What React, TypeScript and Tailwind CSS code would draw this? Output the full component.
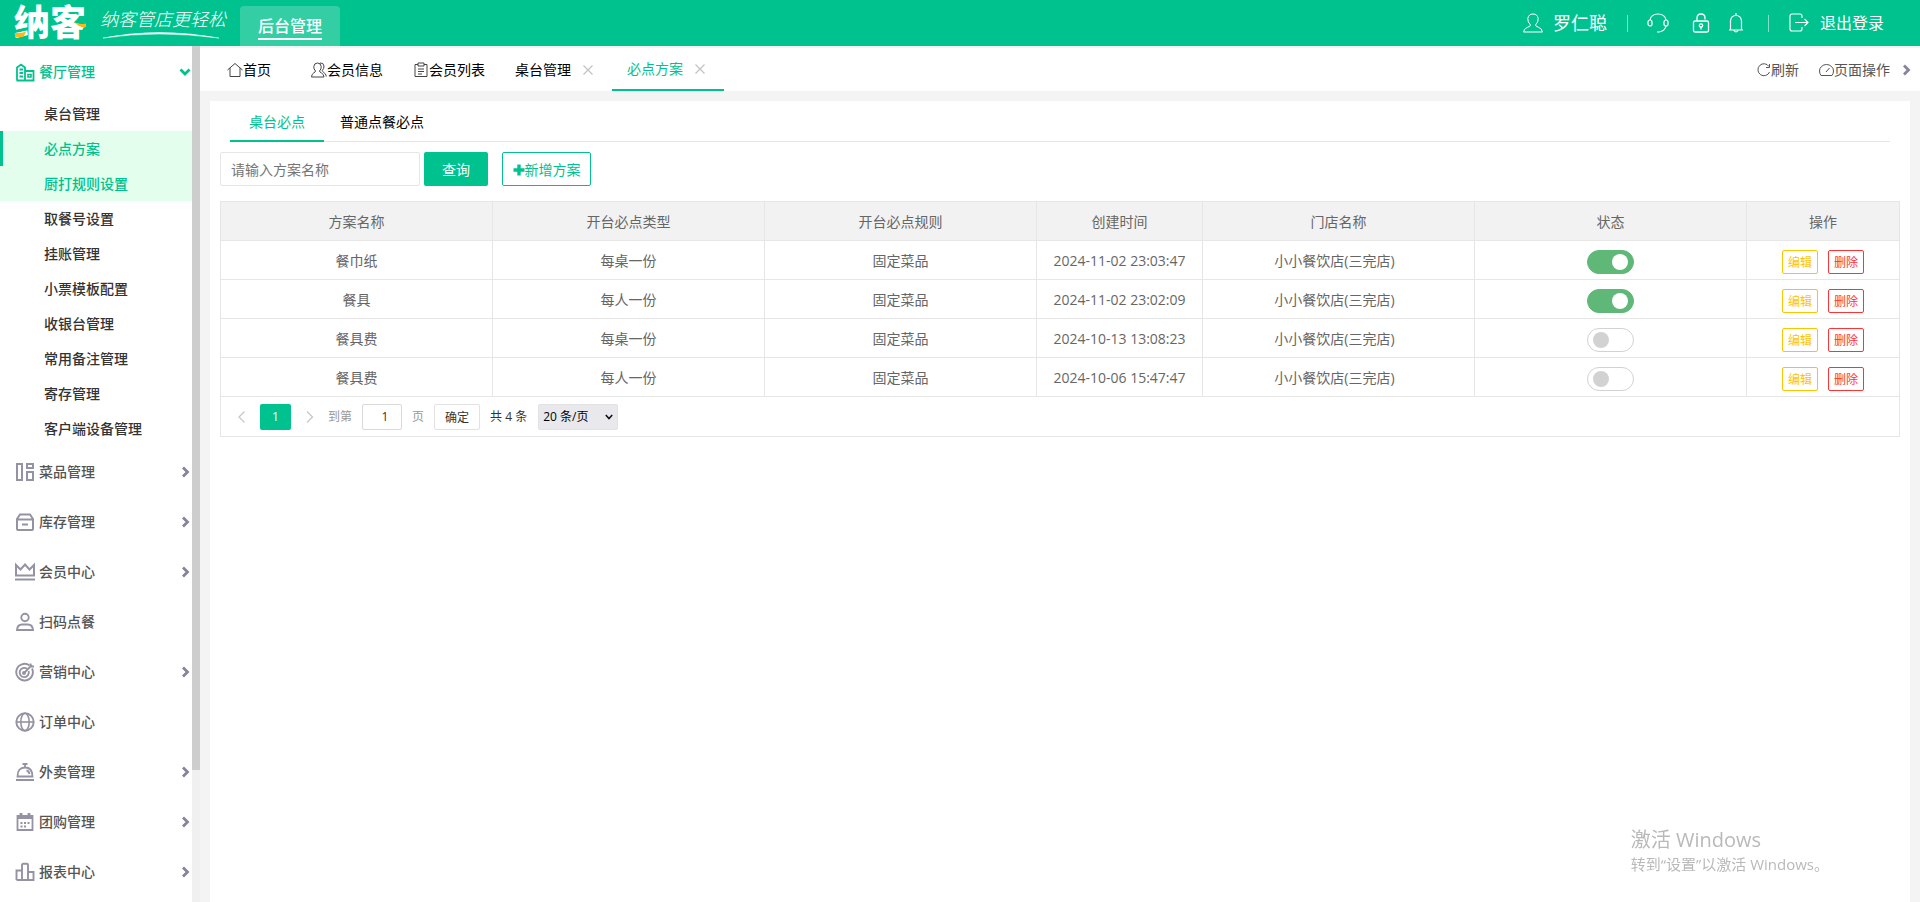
import React from 'react';

type IconProps = { children: React.ReactNode; className?: string; box?: string; width?: number };

const Icon: React.FC<IconProps> = ({ children, className = "h-5 w-5", box = "0 0 20 20", width = 2 }) => (
    <svg
        viewBox={box}
        className={`shrink-0 ${className}`}
        fill="none"
        stroke="currentColor"
        strokeWidth={width}
        aria-hidden="true"
    >
        {children}
    </svg>
);

const Chevron: React.FC<{ down?: boolean }> = ({ down }) => (
    <Icon className="h-3 w-3" box="0 0 12 12" width={2.8}>
        {down ? <path d="M1.500 3.500l4.500 4.500L10.500 3.500" /> : <path d="M4 1.500L8.500 6L4 10.500" />}
    </Icon>
);

const icons = {
    restaurant: (
        <>
            <path d="M2 18.500V5.500L6 2.500l4 3v13M10 9h8.500v9.500H1.500M4.500 7.500H8M4.500 11H8M4.500 14.500H8" strokeWidth="1.8" />
            <path d="M13 12.500h3v2.500h-3z" strokeWidth="1.6" />
        </>
    ),
    dish: <path d="M2 2h5v16H2zM12 2h6v4h-6zM12 10h6v8h-6z" strokeWidth="2" />,
    stock: <path d="M2 7.500h16V17q0 1-1 1H3q-1 0-1-1zM2 7l3-4.500h10L18 7M7 12.500h6" strokeWidth="2" />,
    crown: <path d="M1 3v10.500h18V3l-4.500 4.500L10 2.500 5.500 7.500zM0 17.500h20" strokeWidth="2" />,
    person: (
        <>
            <circle cx="10" cy="5.500" r="3.700" strokeWidth="1.9" />
            <path d="M2 18q.5-5.500 5-5.500h6q4.500 0 5 5.500z" strokeWidth="1.9" />
        </>
    ),
    target: (
        <>
            <path d="M14.500 3.500A8.300 8.300 0 1 0 17 6.500" strokeWidth="1.9" />
            <path d="M12 6.800A4.600 4.600 0 1 0 13.600 9" strokeWidth="1.9" />
            <path d="M9 11l8-8M15.500 1.500v3H19" strokeWidth="1.8" />
            <circle cx="9" cy="11" r="1" fill="currentColor" />
        </>
    ),
    globe: (
        <>
            <circle cx="10" cy="10" r="8.700" strokeWidth="1.9" />
            <ellipse cx="10" cy="10" rx="4.200" ry="8.700" strokeWidth="1.6" />
            <path d="M1 10h18" strokeWidth="1.6" />
        </>
    ),
    bell: (
        <path d="M2.500 14.500q0-9 7.500-9t7.500 9zM1 18h18M7.500 2h5M10 2v3.500M11.500 8.500q2.500.5 3 3.500" strokeWidth="1.8" />
    ),
    calendar: (
        <>
            <path d="M2.500 4h15v14h-15z" strokeWidth="1.8" />
            <path d="M2 5.500h16M6 1v4M14 1v4" strokeWidth="2.8" />
            <path d="M5.500 11h9M5.500 14.500h5.500" strokeWidth="2" strokeDasharray="2 1.500" />
        </>
    ),
    report: <path d="M1.500 18V8.500H7M13 10h5.500v8h-17M7 18V3q0-1.200 1.200-1.200h3.600Q13 1.800 13 3v15" strokeWidth="1.9" />,
};

const subMenu = [
    { label: "桌台管理" },
    { label: "必点方案", active: true, bar: true },
    { label: "厨打规则设置", active: true },
    { label: "取餐号设置" },
    { label: "挂账管理" },
    { label: "小票模板配置" },
    { label: "收银台管理" },
    { label: "常用备注管理" },
    { label: "寄存管理" },
    { label: "客户端设备管理" },
];

const menu = [
    { label: "菜品管理", icon: icons.dish, arrow: true },
    { label: "库存管理", icon: icons.stock, arrow: true },
    { label: "会员中心", icon: icons.crown, arrow: true },
    { label: "扫码点餐", icon: icons.person, arrow: false },
    { label: "营销中心", icon: icons.target, arrow: true },
    { label: "订单中心", icon: icons.globe, arrow: false },
    { label: "外卖管理", icon: icons.bell, arrow: true },
    { label: "团购管理", icon: icons.calendar, arrow: true },
    { label: "报表中心", icon: icons.report, arrow: true },
];

const rows = [
    { name: "餐巾纸", type: "每桌一份", rule: "固定菜品", time: "2024-11-02 23:03:47", shop: "小小餐饮店(三完店)", on: true },
    { name: "餐具", type: "每人一份", rule: "固定菜品", time: "2024-11-02 23:02:09", shop: "小小餐饮店(三完店)", on: true },
    { name: "餐具费", type: "每桌一份", rule: "固定菜品", time: "2024-10-13 13:08:23", shop: "小小餐饮店(三完店)", on: false },
    { name: "餐具费", type: "每人一份", rule: "固定菜品", time: "2024-10-06 15:47:47", shop: "小小餐饮店(三完店)", on: false },
];

const columns = [
    { title: "方案名称", width: "w-[272px]" },
    { title: "开台必点类型", width: "w-[272px]" },
    { title: "开台必点规则", width: "w-[272px]" },
    { title: "创建时间", width: "w-[166px]" },
    { title: "门店名称", width: "w-[272px]" },
    { title: "状态", width: "w-[272px]" },
    { title: "操作", width: "w-[153px]" },
];

const Header: React.FC = () => (
    <header className="flex h-[46px] shrink-0 items-center justify-between bg-[#00c28e] text-white">
        <div className="flex h-full items-center">
            <a href="#" className="relative ml-[14px] text-4xl leading-[46px] font-black">
                纳客
                <svg viewBox="0 0 72 46" className="absolute top-0 left-0 h-[46px] w-[72px]" aria-hidden="true">
                    <path d="M1 33q6 .5 11-1.500l-2 4.500q-4 2-9 1z" fill="#fbb915" />
                    <path d="M60 22q5 3 12 1.500v3.500q-6 1.500-12-5z" fill="#fbb915" />
                </svg>
            </a>
            <div className="ml-[14px] flex w-[126px] flex-col">
                <span className="text-lg leading-6 font-light italic">纳客管店更轻松</span>
                <svg viewBox="0 0 126 8" className="h-2 w-full" aria-hidden="true">
                    <path d="M3 7Q58-4 119 7Q58-1 3 7z" fill="#fff" stroke="#fff" strokeWidth="0.5" />
                </svg>
            </div>
            <a href="#" className="ml-[14px] flex h-10 w-[100px] justify-center self-end rounded-t bg-white/20">
                <span className="h-[34px] border-b-2 border-white pt-2 text-base leading-6 font-medium">后台管理</span>
            </a>
        </div>
        <div className="flex items-center pr-9">
            <Icon className="h-5 w-5" width={1}>
                <path d="M7.500 12Q4.500 9 4.800 5.500 5.500 1 10 1t5.200 4.500Q15.500 9 12.500 12q0 1.500 3 2.300Q19 15.500 19.500 19H.5q.5-3.500 4-4.700 3-.8 3-2.300z" />
            </Icon>
            <a href="#" className="ml-[10px] text-lg leading-6">罗仁聪</a>
            <span className="ml-5 h-[17px] w-px bg-white/50"></span>
            <button type="button" aria-label="客服" className="ml-[19px]">
                <Icon className="h-[22px] w-[22px]" box="0 0 22 22" width={1.2}>
                    <path d="M3 8Q4 2 11 2t8 6M19 14q-1 5-7 6h-2" />
                    <rect x="1" y="8" width="4" height="6" rx="2" />
                    <rect x="17" y="8" width="4" height="6" rx="2" />
                </Icon>
            </button>
            <button type="button" aria-label="锁屏" className="ml-[23px]">
                <Icon className="h-5 w-[18px]" box="0 0 18 20" width={1.3}>
                    <rect x="1.500" y="8" width="15" height="11" rx="1.500" />
                    <path d="M5 8V5q0-4 4-4t4 4v1.500M9 13.500v3" />
                    <circle cx="9" cy="12.500" r="1.700" />
                </Icon>
            </button>
            <button type="button" aria-label="消息" className="ml-[18px]">
                <Icon className="h-5 w-4" box="0 0 16 20" width={1.2}>
                    <path d="M1 17h14M2.500 17V8Q3 2.500 8 2.500T13.500 8v9M8 0v2.500M6 17.500q2 3 4 0" />
                </Icon>
            </button>
            <span className="ml-6 h-[17px] w-px bg-white/50"></span>
            <a href="#" className="ml-5 flex items-center gap-[11px] text-base leading-6">
                <Icon className="h-5 w-5" width={1.1}>
                    <path d="M13 5V3q0-2-2-2H3Q1 1 1 3v13q0 2 2 2h8q2 0 2-2v-2M6 9.500h13M15.500 6L19 9.500 15.500 13" />
                </Icon>
                退出登录
            </a>
        </div>
    </header>
);

const Sidebar: React.FC = () => (
    <aside className="flex w-[200px] shrink-0 bg-white">
        <nav className="flex-1 text-sm font-medium">
            <a href="#" className="flex h-[50px] items-center pt-[2px] pr-px pl-[15px] text-[#00c28e]">
                <Icon>{icons.restaurant}</Icon>
                <span className="ml-1 flex-1">餐厅管理</span>
                <Chevron down />
            </a>
            <ul>
                {subMenu.map((item) => (
                    <li key={item.label}>
                        <a
                            href="#"
                            className={`flex h-[35px] items-center border-l-[3px] pl-[41px] ${item.bar ? "border-[#00c28e]" : "border-transparent"} ${item.active ? "bg-[#e3feec] text-[#00c28e]" : "text-[#333]"}`}
                        >
                            {item.label}
                        </a>
                    </li>
                ))}
            </ul>
            {menu.map((item) => (
                <a key={item.label} href="#" className="flex h-[50px] items-center pt-[2px] pr-px pl-[15px] text-[#555]">
                    <Icon className="h-5 w-5 text-[#9393a4]">{item.icon}</Icon>
                    <span className="ml-1 flex-1">{item.label}</span>
                    {item.arrow && <span className="text-[#85859a]"><Chevron /></span>}
                </a>
            ))}
        </nav>
        <div className="w-2 bg-[#f0f0f0]">
            <div className="h-[724px] bg-[#cdcdcd]"></div>
        </div>
    </aside>
);

const CloseTab: React.FC = () => (
    <button type="button" aria-label="关闭" className="ml-3 text-[#c2c2c2]">
        <Icon className="h-[10px] w-[10px]" box="0 0 10 10" width={1.2}>
            <path d="M.5.5l9 9M9.500.5l-9 9" />
        </Icon>
    </button>
);

const TabBar: React.FC = () => (
    <div className="mt-[2px] flex h-[43px] shrink-0 justify-between bg-white pr-2 text-sm text-black">
        <div className="flex pl-3">
            <a href="#" className="flex items-center pr-[25px] pl-[15px]">
                <Icon className="h-4 w-4 text-[#444]" box="0 0 16 16" width={1}>
                    <path d="M.5 8L8 1.500 15.500 8M3 6v8.500h10V6" />
                </Icon>
                首页
            </a>
            <a href="#" className="flex items-center px-[15px]">
                <Icon className="h-4 w-4 text-[#444]" box="0 0 16 16" width={1}>
                    <path d="M4.500 9Q2.500 7 2.800 4.500 3.200 1 6.500 1t3.700 3.500Q10.500 7 8.500 9q0 1 2 2 2.200 1 2.500 4H.5q.2-3 2.200-4 1.800-1 1.800-2zM9 1q3.500-.5 4 3 .2 2.500-1.700 4.500 0 1 1.500 2 2.200 1 2.500 4" />
                </Icon>
                会员信息
            </a>
            <a href="#" className="flex items-center px-[15px]">
                <Icon className="h-4 w-4 text-[#444]" box="0 0 16 16" width={1}>
                    <path d="M5 2.500H2v12h12v-12h-3M5 1h6v3H5zM5 7h6M5 9.500h6M5 12h4" />
                </Icon>
                会员列表
            </a>
            <div className="flex w-[112px] items-center pl-[15px]">
                <a href="#">桌台管理</a>
                <CloseTab />
            </div>
            <div className="flex w-[112px] items-center border-b-2 border-[#00c28e] pl-[15px] text-[#00c28e]">
                <a href="#">必点方案</a>
                <CloseTab />
            </div>
        </div>
        <div className="flex items-center text-[#555]">
            <button type="button" className="flex items-center">
                <Icon className="h-[14px] w-[14px]" box="0 0 14 14" width={1}>
                    <path d="M12.500 9A6 6 0 1 1 12 3.500M12.500 1v3.500H9" />
                </Icon>
                刷新
            </button>
            <button type="button" className="ml-5 flex items-center">
                <Icon className="h-[14px] w-[15px]" box="0 0 15 14" width={1}>
                    <path d="M2 12.500Q.5 10.500.5 8a7 6.500 0 0 1 14 0q0 2.500-1.500 4.500zM7 9l3.500-4" />
                </Icon>
                页面操作
                <span className="ml-[10px] text-[#85859a]"><Chevron /></span>
            </button>
        </div>
    </div>
);

const PlanTable: React.FC = () => (
    <table className="w-full table-fixed border-collapse text-center text-sm text-[#666]">
        <thead className="bg-[#f2f2f2]">
            <tr>
                {columns.map((col) => (
                    <th key={col.title} className={`h-[39px] border border-[#e6e6e6] p-0 pt-[2px] font-normal ${col.width}`}>
                        {col.title}
                    </th>
                ))}
            </tr>
        </thead>
        <tbody>
            {rows.map((row) => (
                <tr key={row.time}>
                    <td className="h-[39px] border border-[#e6e6e6] p-0 pt-[2px]">{row.name}</td>
                    <td className="border border-[#e6e6e6] p-0 pt-[2px]">{row.type}</td>
                    <td className="border border-[#e6e6e6] p-0 pt-[2px]">{row.rule}</td>
                    <td className="border border-[#e6e6e6] p-0 pt-[2px] whitespace-nowrap">{row.time}</td>
                    <td className="border border-[#e6e6e6] p-0 pt-[2px] pr-2">{row.shop}</td>
                    <td className="border border-[#e6e6e6] p-0 pt-1">
                        <input
                            type="checkbox"
                            role="switch"
                            aria-label="状态"
                            defaultChecked={row.on}
                            className="mx-auto flex h-6 w-[47px] appearance-none items-center rounded-full border border-[#d2d2d2] px-[5px] before:h-4 before:w-4 before:rounded-full before:bg-[#d2d2d2] checked:justify-end checked:border-[#5fb878] checked:bg-[#5fb878] checked:before:bg-white"
                        />
                    </td>
                    <td className="border border-[#e6e6e6] p-0 pt-1">
                        <div className="flex justify-center gap-[10px] text-xs">
                            <button type="button" className="h-6 w-9 rounded-xs border border-[#ffc300] pt-[2px] text-[#ffc300]">编辑</button>
                            <button type="button" className="h-6 w-9 rounded-xs border border-[#ff3333] pt-[2px] text-[#ff3333]">删除</button>
                        </div>
                    </td>
                </tr>
            ))}
        </tbody>
    </table>
);

const Pagination: React.FC = () => (
    <div className="flex h-10 items-center border border-t-0 border-[#e6e6e6] pl-[15px] text-xs text-[#333]">
        <button type="button" aria-label="上一页" className="text-[#c8c8c8]">
            <Icon className="h-3 w-3" box="0 0 12 12" width={1.3}><path d="M8.500.5L3 6l5.500 5.500" /></Icon>
        </button>
        <button type="button" className="ml-3 h-[26px] w-[31px] rounded-xs bg-[#00c28e] text-white">1</button>
        <button type="button" aria-label="下一页" className="ml-[13px] text-[#c8c8c8]">
            <Icon className="h-3 w-3" box="0 0 12 12" width={1.3}><path d="M3 .5L8.500 6 3 11.500" /></Icon>
        </button>
        <label className="ml-3 flex items-center gap-[10px] text-[#999]">
            到第
            <input defaultValue="1" className="h-[26px] w-10 rounded-xs border border-[#d9d9d9] pl-[6px] text-center text-[#333]" />
            页
        </label>
        <button type="button" className="ml-[10px] h-[26px] w-[46px] rounded-xs border border-[#e2e2e2] pt-[2px]">确定</button>
        <span className="ml-[10px]">共 4 条</span>
        <div className="relative ml-[11px]">
            <select aria-label="每页条数" className="h-[26px] w-20 appearance-none rounded-xs border border-[#e2e2e2] bg-[#e9e9ed] pl-1 text-black">
                <option>20 条/页</option>
            </select>
            <svg viewBox="0 0 8 6" className="pointer-events-none absolute top-[10px] right-[5px] h-[6px] w-2" fill="none" stroke="#111" strokeWidth="1.600" aria-hidden="true">
                <path d="M.8 1L4 4.500 7.200 1" />
            </svg>
        </div>
    </div>
);

const App: React.FC = () => {
    return (
        <div className="flex min-h-screen flex-col bg-[#f4f4f4] font-['Open_Sans','Noto_Sans_CJK_SC',sans-serif]">
            <Header />
            <div className="flex flex-1">
                <Sidebar />
                <main className="flex min-w-0 flex-1 flex-col">
                    <TabBar />
                    <section className="mx-[10px] mt-[10px] flex-1 bg-white px-[10px]">
                        <div className="mx-[10px] flex h-[41px] border-b border-[#e6e6e6] text-sm text-black">
                            <a href="#" className="-mb-px flex items-center border-b-2 border-[#00c28e] px-[19px] pt-[2px] text-[#00c28e]">
                                桌台必点
                            </a>
                            <a href="#" className="flex items-center px-4 pt-[2px]">普通点餐必点</a>
                        </div>
                        <form className="mt-[10px] flex text-sm">
                            <input
                                aria-label="方案名称"
                                placeholder="请输入方案名称"
                                className="h-[34px] w-[200px] rounded-xs border border-[#e6e6e6] px-[10px] placeholder:text-[#757575]"
                            />
                            <button type="button" className="ml-1 h-[34px] w-16 rounded-xs bg-[#00c28e] pt-[2px] text-white">查询</button>
                            <button
                                type="button"
                                className="ml-[14px] flex h-[34px] w-[89px] items-center justify-center rounded-xs border border-[#00c28e] pt-[2px] text-[#00c28e]"
                            >
                                <Icon className="h-3 w-3" box="0 0 12 12" width={3.4}>
                                    <path d="M6 .5v11M.5 6h11" />
                                </Icon>
                                新增方案
                            </button>
                        </form>
                        <div className="mt-[15px]">
                            <div className="pr-px">
                                <PlanTable />
                            </div>
                            <Pagination />
                        </div>
                    </section>
                </main>
            </div>
            <div className="pointer-events-none fixed right-[91px] bottom-7 text-[#b9b9b9]">
                <p className="text-xl leading-7">激活 Windows</p>
                <p className="text-[15px] leading-5">转到“设置”以激活 Windows。</p>
            </div>
        </div>
    );
};

export default App;
